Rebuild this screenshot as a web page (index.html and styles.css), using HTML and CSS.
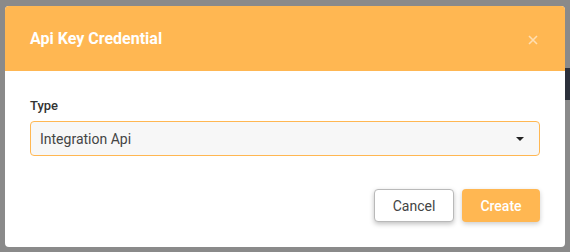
FILE: index.html
```html
<!DOCTYPE html>
<html>
<head>
<meta charset="utf-8">
<link rel="stylesheet" href="styles.css">
</head>
<body>
<div class="backdrop-strip"></div>
<div class="dialog">
  <div class="dialog-header">
    <h1 class="dialog-title">Api Key Credential</h1>
    <span class="close">
      <svg width="10" height="10" viewBox="0 0 10 10"><path d="M1 1L9 9M9 1L1 9" stroke="currentColor" stroke-width="1.6"/></svg>
    </span>
  </div>
  <div class="dialog-body">
    <label class="field-label">Type</label>
    <div class="select">
      <span class="select-value">Integration Api</span>
      <span class="caret"></span>
    </div>
  </div>
  <div class="dialog-footer">
    <button class="btn btn-cancel">Cancel</button>
    <button class="btn btn-create">Create</button>
  </div>
</div>
</body>
</html>
```
FILE: styles.css
```css
html, body {
  margin: 0;
  padding: 0;
}
body {
  width: 570px;
  height: 252px;
  background: #8a8a8a;
  font-family: Roboto, "Liberation Sans", sans-serif;
  overflow: hidden;
  position: relative;
}
.backdrop-strip {
  position: absolute;
  right: 0;
  top: 68px;
  width: 6px;
  height: 32px;
  background: #2c303b;
}
.dialog {
  position: relative;
  margin: 6px 5px 0 5px;
  width: 560px;
  height: 241px;
  background: #fff;
  border-radius: 4px;
  overflow: hidden;
  display: flex;
  flex-direction: column;
}
.dialog-header {
  height: 65px;
  background: #ffb752;
  display: flex;
  align-items: center;
  justify-content: space-between;
  padding: 0 27px 0 25px;
}
.dialog-title {
  margin: 0;
  font-size: 16px;
  font-weight: 700;
  color: #fff;
  letter-spacing: 0;
}
.close {
  color: rgba(255,255,255,0.55);
  display: flex;
  margin-top: 2px;
}
.dialog-body {
  padding: 27px 25px 0 25px;
  display: flex;
  flex-direction: column;
}
.field-label {
  font-size: 13px;
  font-weight: 500;
  color: #333;
  line-height: 16px;
  margin-bottom: 7px;
}
.select {
  height: 33px;
  border: 1px solid #ffb752;
  border-radius: 4px;
  background: #f7f7f7;
  display: flex;
  align-items: center;
  justify-content: space-between;
  padding: 0 15px 0 9px;
}
.select-value {
  font-size: 14px;
  color: #444;
}
.caret {
  width: 0;
  height: 0;
  border-left: 4px solid transparent;
  border-right: 4px solid transparent;
  border-top: 4px solid #222;
}
.dialog-footer {
  display: flex;
  justify-content: flex-end;
  gap: 8px;
  padding: 33px 25px 0 0;
}
.btn {
  height: 33px;
  border-radius: 4px;
  font-family: Roboto, "Liberation Sans", sans-serif;
  font-size: 14px;
  cursor: pointer;
}
.btn-cancel {
  width: 80px;
  background: #fff;
  color: #444;
  border: 1px solid #b9b9b9;
  box-shadow: 0 2px 5px rgba(0,0,0,0.25);
}
.btn-create {
  width: 78px;
  background: #ffb752;
  color: #fff;
  font-weight: 500;
  border: none;
  box-shadow: 0 2px 5px rgba(0,0,0,0.2);
}
```
